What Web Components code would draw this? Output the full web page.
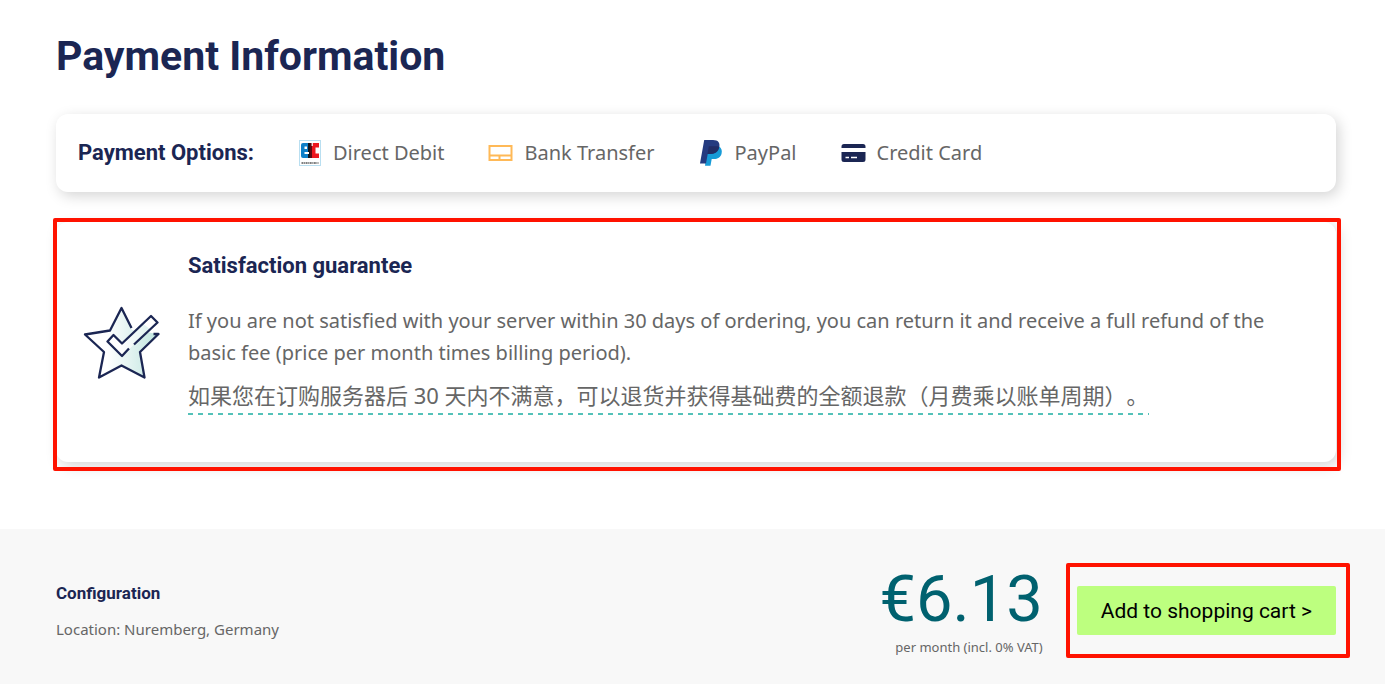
<!DOCTYPE html>
<html lang="en">
<head>
<meta charset="utf-8">
<meta name="viewport" content="width=device-width, initial-scale=1">
<title>Payment Information</title>
<style>
  body {
    margin: 0;
    background: #fff;
    color: #666;
    font-family: "Noto Sans", "Noto Sans CJK SC", sans-serif;
    font-size: 20px;
    line-height: 32px;
    --strong-font: Roboto, "Noto Sans CJK SC", sans-serif;
    --navy: #1b2653;
    --teal: #00616f;
    --lime: #bdff7f;
    --mark: #ff1200;
  }
</style>
</head>
<body>
<payment-page></payment-page>

<script>
class BaseElement extends HTMLElement {
  constructor() {
    super();
    this.attachShadow({ mode: 'open' }).innerHTML = this.constructor.markup;
  }
}

/* White rounded panel with a soft shadow */
customElements.define('soft-card', class extends BaseElement {
  static markup = `
    <style>
      :host { display: block; background: #fff; border-radius: 12px;
        box-shadow: 3px 4px 14px rgba(0, 0, 0, .17); }
    </style>
    <slot></slot>`;
});

/* Red frame drawn over and around its content */
customElements.define('highlight-frame', class extends BaseElement {
  static markup = `
    <style>
      :host { display: block; position: relative; }
      .frame { position: absolute; inset: var(--frame-inset, -4px);
        border: 4px solid var(--mark); border-radius: 2px; pointer-events: none; }
    </style>
    <slot></slot><div class="frame"></div>`;
});

customElements.define('payment-option', class extends BaseElement {
  static markup = `
    <style>
      :host { display: flex; align-items: center; gap: 11px; white-space: nowrap; }
      ::slotted(svg) { display: block; flex: none; }
    </style>
    <slot name="icon"></slot><span><slot></slot></span>`;
});

customElements.define('payment-options', class extends BaseElement {
  static markup = `
    <style>
      :host { display: block; }
      .row { display: flex; flex-wrap: wrap; align-items: center; gap: 0 44px; padding: 23px 22px; }
      h2 { margin: 0; font: 700 22px/32px var(--strong-font); color: var(--navy); }
    </style>
    <soft-card><div class="row">
      <h2>Payment Options:</h2>
      <payment-option>
        <svg slot="icon" width="24" height="28" viewBox="0 0 24 28" aria-hidden="true">
          <rect x="1.500" y="1.500" width="21" height="25" fill="#fff" stroke="#b9dff1"/>
          <path d="M5 4h5v15H5q-2 0-2-2V6q0-2 2-2z" fill="#0d7fc8"/>
          <path d="M10 4h3v15h-3z" fill="#14161f"/>
          <path d="M13 4h8v4.500h-3.500v6H21V19h-8z" fill="#ed171f"/>
          <path d="M12 4h2v15h-2z" fill="#5b0c14"/>
          <path d="M6.500 7.500H9V10H6.500zM6.500 13H11v2H6.500z" fill="#fff"/>
          <path d="M13.500 4h1.500v3h-1.500z" fill="#fff" opacity=".8"/>
          <path d="M3.500 24h17" stroke="#555" stroke-width="1.500" stroke-dasharray="2 .6 1 .5"/>
        </svg>Direct Debit
      </payment-option>
      <payment-option>
        <svg slot="icon" width="25" height="18" viewBox="0 0 25 18" fill="none" stroke="#ffb957" stroke-width="2" aria-hidden="true">
          <path d="M1.500 2h22v14h-22zM1.500 11.500h22M11.500 11.500V16"/>
        </svg>Bank Transfer
      </payment-option>
      <payment-option>
        <svg slot="icon" width="25" height="28" viewBox="0 0 25 28" aria-hidden="true">
          <path d="M8.500 7.500H20c2.500 1.500 3.300 4 2.600 7-1 4-4 5.500-7.500 5.500h-2.400l-1.200 6.800H6z" fill="#179bd7"/>
          <path d="M5.200 1H14c5.200 0 7.200 2.800 6.300 7-1 4.900-4.300 7-9 7H8.700L7 24.500H1z" fill="#253b80"/>
          <path d="M9.800 7.200h8.400l2 .6c-.9 5-4.200 7.200-8.900 7.200H8.500z" fill="#222d65"/>
        </svg>PayPal
      </payment-option>
      <payment-option>
        <svg slot="icon" width="25" height="20" viewBox="0 0 25 20" aria-hidden="true">
          <path d="M3 1h19q2.500 0 2.500 2.500V5H.5V3.500Q.5 1 3 1zM.5 9h24v7.500Q24.500 19 22 19H3Q.5 19 .5 16.500z" fill="#1b2653"/>
          <path d="M4.500 14.500h3.500M10 14.500h6" stroke="#fff" stroke-width="1.500"/>
        </svg>Credit Card
      </payment-option>
    </div></soft-card>`;
});

customElements.define('satisfaction-guarantee', class extends BaseElement {
  static markup = `
    <style>
      :host { display: block; }
      .row { display: flex; align-items: center; gap: 28px; padding: 0 56px 0 27px; }
      .text { padding: 28px 0 51px; }
      svg { flex: none; }
      h2 { margin: 0 0 23px; font: 700 22px/32px var(--strong-font); color: var(--navy); }
      p { margin: 0; }
      .zh { margin-top: 10px; font-size: 22px; text-spacing-trim: space-all; }
      .zh span { padding-bottom: 5px;
        background: repeating-linear-gradient(90deg, #54c1b8 0 5px, transparent 5px 10px) left bottom / 100% 2px no-repeat; }
    </style>
    <soft-card><div class="row">
      <svg width="77" height="76" viewBox="0 0 77 76" aria-hidden="true">
        <defs><linearGradient id="tint" x1="0.300" x2="1"><stop offset="0" stop-color="#fff"/><stop offset="1" stop-color="#bfe5df"/></linearGradient></defs>
        <path d="M38.500 4l10.500 22 26.500 4-19 18 5 25.500-23-12-22.500 12L21 48 2 30l25.500-4z" fill="url(#tint)"/>
        <path d="M25 37l6-6 8 8 29-28 6.500 6.500L39 52z" fill="#fff"/>
        <path d="M25 37l6-6 8 8 20-20 8 6L39 52z" fill="url(#tint)" opacity=".5"/>
        <path d="M48.500 24L38.500 4 27 26.500 2 30.500 21 48 16 73.500l22.500-12 23 12L57 48l18.500-18h-5M46 44.500L39 52 24.500 37.500l6-6.500 8.500 8.500L68 12l6.500 6.500-23.500 22" fill="none" stroke="#1b2653" stroke-width="2.300" stroke-linejoin="round"/>
      </svg>
      <div class="text">
        <h2>Satisfaction guarantee</h2>
        <p>If you are not satisfied with your server within 30 days of ordering, you can return it and receive a full refund of the basic fee (price per month times billing period).</p>
        <p class="zh" lang="zh-CN"><span>如果您在订购服务器后 30 天内不满意，可以退货并获得基础费的全额退款（月费乘以账单周期）。</span></p>
      </div>
    </div></soft-card>`;
});

customElements.define('order-bar', class extends BaseElement {
  static markup = `
    <style>
      :host { display: flex; align-items: center; gap: 34px; padding: 32px 49px 24px 56px; background: #f8f8f8; }
      .config { flex: 1; font-size: 15px; line-height: 36px; }
      h2 { margin: 0; font: 700 17px/36px var(--strong-font); color: var(--navy); }
      p { margin: 0; }
      .price { text-align: right; }
      .amount { font: 65px/72px var(--strong-font); color: var(--teal); }
      .note { font-size: 13px; line-height: 24px; }
      highlight-frame { --frame-inset: -23px -14px -23px -11px; }
      button { display: block; box-sizing: border-box; height: 49px; border: 0; border-radius: 2px; padding: 0 24px;
        background: var(--lime); color: #000; font: 21px/32px var(--strong-font); cursor: pointer; }
    </style>
    <div class="config"><h2>Configuration</h2><p>Location: Nuremberg, Germany</p></div>
    <div class="price"><p class="amount">€6.13</p><p class="note">per month (incl. 0% VAT)</p></div>
    <highlight-frame><button type="button">Add to shopping cart &gt;</button></highlight-frame>`;
});

customElements.define('payment-page', class extends BaseElement {
  static markup = `
    <style>
      :host { display: flex; flex-direction: column; min-height: 100vh; }
      main { padding: 24px 49px 67px 56px; }
      h1 { margin: 0 0 26px; font: 700 41px/64px var(--strong-font); color: var(--navy); }
      highlight-frame { margin-top: 30px; --frame-inset: -4px -5px -9px -3px; }
      order-bar { flex: 1; }
    </style>
    <main>
      <h1>Payment Information</h1>
      <payment-options></payment-options>
      <highlight-frame><satisfaction-guarantee></satisfaction-guarantee></highlight-frame>
    </main>
    <order-bar></order-bar>`;
});
</script>
</body>
</html>
